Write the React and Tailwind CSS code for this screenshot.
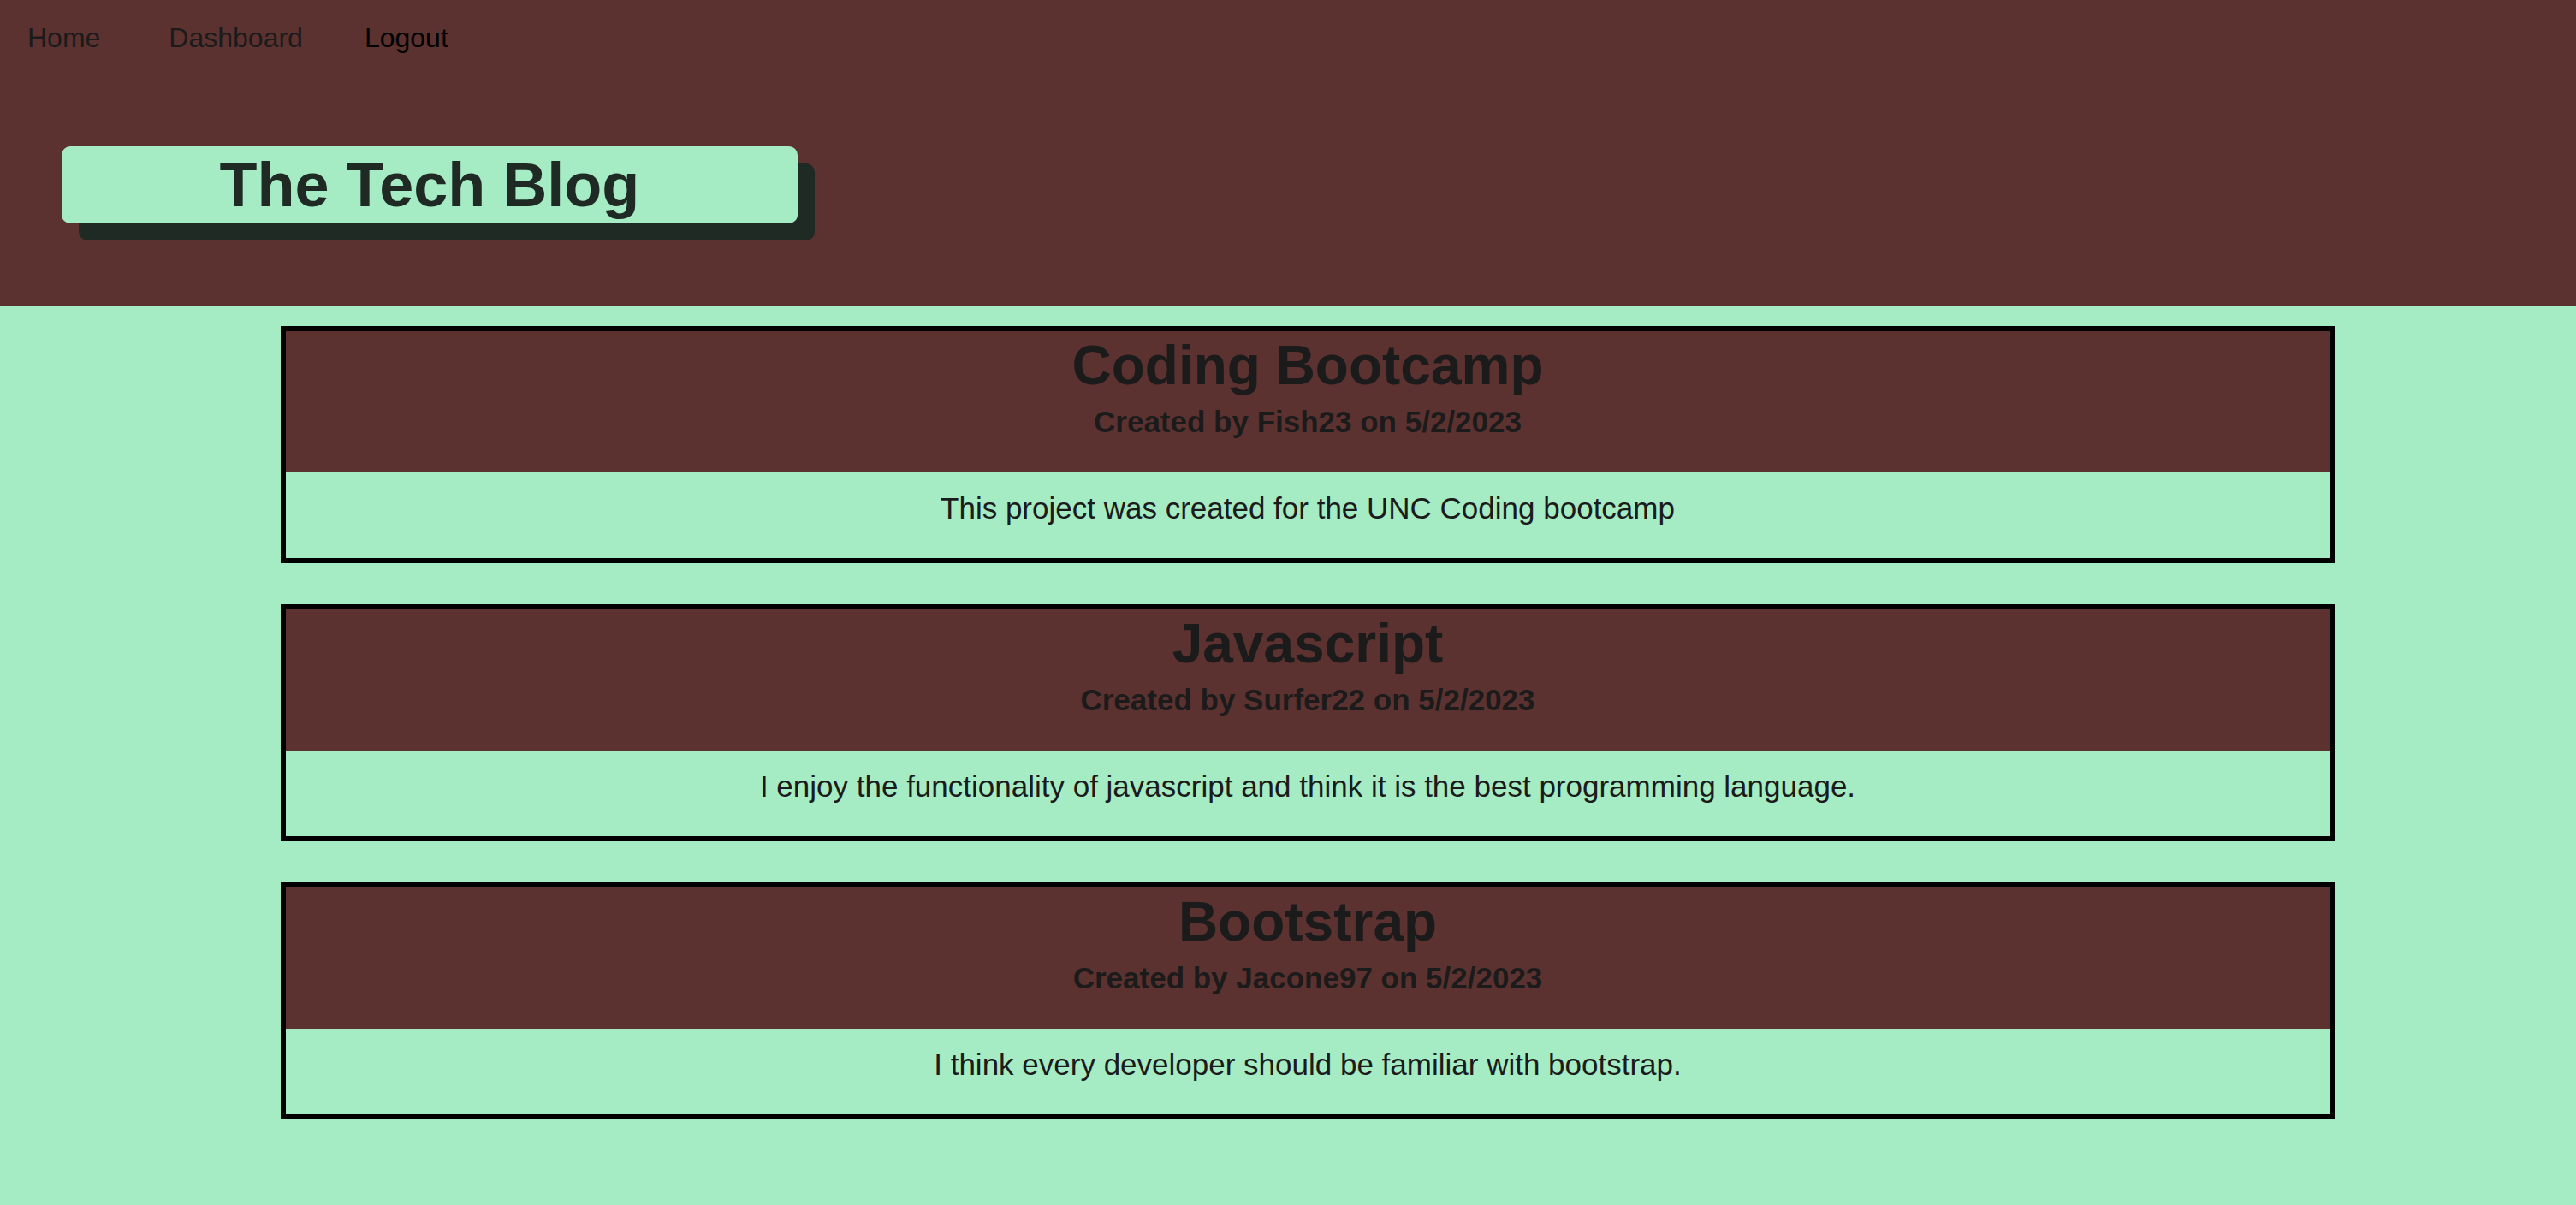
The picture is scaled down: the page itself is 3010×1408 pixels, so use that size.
const posts = [
  {
    title: 'Coding Bootcamp',
    byline: 'Created by Fish23 on 5/2/2023',
    body: 'This project was created for the UNC Coding bootcamp',
  },
  {
    title: 'Javascript',
    byline: 'Created by Surfer22 on 5/2/2023',
    body: 'I enjoy the functionality of javascript and think it is the best programming language.',
  },
  {
    title: 'Bootstrap',
    byline: 'Created by Jacone97 on 5/2/2023',
    body: 'I think every developer should be familiar with bootstrap.',
  },
];

function Post({ title, byline, body }) {
  return (
    <article className="border-[6px] border-black text-center text-[#1b1b1b]">
      <header className="bg-[#5b3230] pt-1 pb-[37px] font-bold">
        <h2 className="text-[64px] leading-[72px]">{title}</h2>
        <p className="mt-2 text-[35px] leading-[44px]">{byline}</p>
      </header>
      <p className="pt-5 pb-9 text-[35px] leading-[44px]">{body}</p>
    </article>
  );
}

export default function App() {
  return (
    <div className="min-h-screen bg-[#a5ebc3] font-['Liberation_Sans',Arial,sans-serif]">
      <header className="bg-[#5b3230] pb-24">
        <nav className="flex px-8 pt-6 text-[32px] leading-10 text-[#1b1b1b]">
          <a href="#home">Home</a>
          <a href="#dashboard" className="ml-20">Dashboard</a>
          <button type="button" className="ml-[72px] text-black">Logout</button>
        </nav>
        <div className="mt-[107px] px-[72px]">
          <h1 className="w-[30%] min-w-fit rounded-[10px] bg-[#a5ebc3] text-center text-[72px] leading-[90px] font-bold text-[#1f2a25] shadow-[20px_20px_0_#1f2a25]">
            The Tech Blog
          </h1>
        </div>
      </header>
      <main className="mr-[282px] ml-[328px] flex flex-col gap-12 pt-6 pb-12">
        {posts.map((post) => (
          <Post key={post.title} {...post} />
        ))}
      </main>
    </div>
  );
}
